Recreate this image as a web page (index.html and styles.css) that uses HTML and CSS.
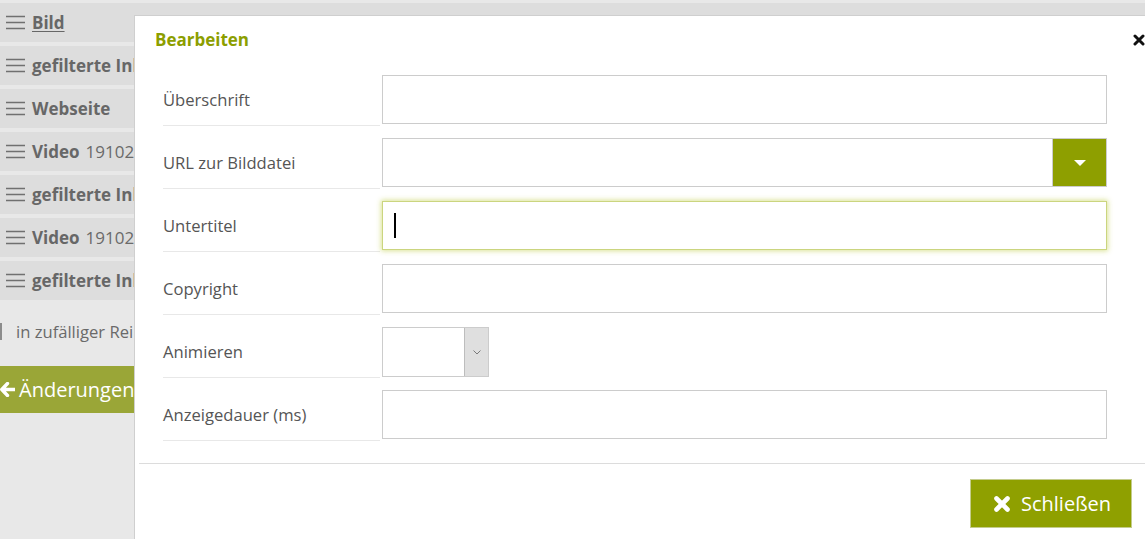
FILE: index.html
```html
<!DOCTYPE html>
<html lang="de">
<head>
<meta charset="utf-8">
<title>Bearbeiten</title>
<link rel="stylesheet" href="styles.css">
</head>
<body>
<div class="page">
  <ul class="list">
    <li class="item">
      <span class="item-text">
        <svg class="burger" width="19" height="15" viewBox="0 0 19 15"><path d="M0 1.5H19M0 7.5H19M0 13.5H19" stroke="#707070" stroke-width="1.5"/></svg>
        <a class="title link" href="#">Bild</a>
      </span>
    </li>
    <li class="item">
      <span class="item-text">
        <svg class="burger" width="19" height="15" viewBox="0 0 19 15"><path d="M0 1.5H19M0 7.5H19M0 13.5H19" stroke="#707070" stroke-width="1.5"/></svg>
        <span class="title">gefilterte Inhalte</span>
      </span>
    </li>
    <li class="item">
      <span class="item-text">
        <svg class="burger" width="19" height="15" viewBox="0 0 19 15"><path d="M0 1.5H19M0 7.5H19M0 13.5H19" stroke="#707070" stroke-width="1.5"/></svg>
        <span class="title">Webseite</span>
      </span>
    </li>
    <li class="item">
      <span class="item-text">
        <svg class="burger" width="19" height="15" viewBox="0 0 19 15"><path d="M0 1.5H19M0 7.5H19M0 13.5H19" stroke="#707070" stroke-width="1.5"/></svg>
        <span class="title">Video</span><span class="meta">191023_video.mp4</span>
      </span>
    </li>
    <li class="item">
      <span class="item-text">
        <svg class="burger" width="19" height="15" viewBox="0 0 19 15"><path d="M0 1.5H19M0 7.5H19M0 13.5H19" stroke="#707070" stroke-width="1.5"/></svg>
        <span class="title">gefilterte Inhalte</span>
      </span>
    </li>
    <li class="item">
      <span class="item-text">
        <svg class="burger" width="19" height="15" viewBox="0 0 19 15"><path d="M0 1.5H19M0 7.5H19M0 13.5H19" stroke="#707070" stroke-width="1.5"/></svg>
        <span class="title">Video</span><span class="meta">191024_video.mp4</span>
      </span>
    </li>
    <li class="item">
      <span class="item-text">
        <svg class="burger" width="19" height="15" viewBox="0 0 19 15"><path d="M0 1.5H19M0 7.5H19M0 13.5H19" stroke="#707070" stroke-width="1.5"/></svg>
        <span class="title">gefilterte Inhalte</span>
      </span>
    </li>
  </ul>
  <div class="random"><span class="cb"></span><span>in zufälliger Reihenfolge</span></div>
  <button class="save" type="button">
    <svg class="save-icon" width="15" height="15" viewBox="0 0 15 15"><path d="M7.5 1.5L1.8 7.5L7.5 13.5M2.2 7.5H15" stroke="#fff" stroke-width="3.4" fill="none" stroke-linejoin="round" stroke-linecap="round"/></svg>
    <span>Änderungen speichern</span>
  </button>
</div>

<div class="modal">
  <div class="modal-header">
    <h2 class="modal-title">Bearbeiten</h2>
    <svg class="close" width="12" height="12" viewBox="0 0 12 12"><path d="M2 2L10 10M10 2L2 10" stroke="#111" stroke-width="3" stroke-linecap="round"/></svg>
  </div>
  <div class="modal-body">
    <div class="form">
      <div class="label"><span>Überschrift</span></div>
      <div class="field"><input class="input" type="text"></div>

      <div class="label"><span>URL zur Bilddatei</span></div>
      <div class="field">
        <div class="group">
          <input class="input" type="text">
          <span class="drop"><svg width="12" height="6" viewBox="0 0 12 6"><path d="M0 0H12L6 6Z" fill="#fff"/></svg></span>
        </div>
      </div>

      <div class="label"><span>Untertitel</span></div>
      <div class="field"><div class="focus-wrap"><input class="input focused" type="text"></div></div>

      <div class="label"><span>Copyright</span></div>
      <div class="field"><input class="input" type="text"></div>

      <div class="label"><span>Animieren</span></div>
      <div class="field">
        <div class="select"><span class="select-val"></span><span class="select-arrow"><svg width="8" height="5" viewBox="0 0 8 5"><path d="M0.5 0.5L4 4L7.5 0.5" stroke="#7a7a7a" stroke-width="1" fill="none"/></svg></span></div>
      </div>

      <div class="label"><span>Anzeigedauer (ms)</span></div>
      <div class="field"><input class="input" type="text"></div>
    </div>
  </div>
  <div class="modal-footer">
    <button class="close-btn" type="button">
      <svg width="18" height="18" viewBox="0 0 18 18"><path d="M3.5 3.5L14.5 14.5M14.5 3.5L3.5 14.5" stroke="#fff" stroke-width="4.6" stroke-linecap="round"/></svg>
      <span>Schließen</span>
    </button>
  </div>
</div>
</body>
</html>
```
FILE: styles.css
```css
html, body {
  margin: 0;
  padding: 0;
}
body {
  width: 1145px;
  height: 539px;
  overflow: hidden;
  position: relative;
  background: #e8e8e8;
  font-family: "Open Sans", "Liberation Sans", sans-serif;
  color: #666;
}
.page {
  padding-top: 3px;
}
.list {
  list-style: none;
  margin: 0;
  padding: 0;
}
.item {
  height: 39px;
  margin-bottom: 4px;
  background: #dddddd;
  display: flex;
  align-items: center;
  padding-left: 6px;
  white-space: nowrap;
  font-size: 17px;
}
.item-text {
  display: flex;
  align-items: center;
  width: 128px;
  overflow: hidden;
}
.burger {
  flex: none;
  margin-right: 7px;
}
.title {
  font-weight: 700;
  color: #676767;
}
.link {
  text-decoration: underline;
  text-underline-offset: 2px;
}
.meta {
  margin-left: 6px;
  color: #6a6a6a;
}
.random {
  margin-top: 18px;
  width: 134px;
  height: 26px;
  display: flex;
  align-items: center;
  font-size: 16.6px;
  color: #6a6a6a;
  white-space: nowrap;
  overflow: hidden;
}
.cb {
  flex: none;
  width: 2px;
  height: 17px;
  background: #8c8c8c;
  margin-right: 14px;
}
.save {
  margin-top: 22px;
  width: 134px;
  height: 47px;
  border: 0;
  padding: 0;
  background: #9aa637;
  color: #fff;
  display: flex;
  align-items: center;
  font-family: inherit;
  font-size: 20px;
  white-space: nowrap;
  overflow: hidden;
}
.save-icon {
  flex: none;
  margin-right: 4px;
}

.modal {
  position: absolute;
  left: 134px;
  top: 15px;
  width: 1019px;
  height: 540px;
  box-sizing: border-box;
  background: #fff;
  border: 1px solid #cfcfcf;
}
.modal-header {
  height: 48px;
  box-sizing: border-box;
  padding: 12px 7px 0 20px;
  display: flex;
  justify-content: space-between;
  align-items: flex-start;
}
.modal-title {
  margin: 0;
  font-size: 17px;
  line-height: 24px;
  font-weight: 700;
  color: #8c9e00;
}
.close {
  margin-top: 6px;
}
.modal-body {
  padding-left: 28px;
}
.form {
  display: grid;
  grid-template-columns: 217px 725px;
  grid-auto-rows: 63px;
  column-gap: 2px;
}
.label {
  padding-top: 11px;
}
.label span {
  display: flex;
  align-items: center;
  height: 49px;
  padding-bottom: 1px;
  border-bottom: 1px solid #e8e8e8;
  font-size: 16.6px;
  color: #555;
}
.field {
  padding-top: 11px;
}
.input {
  display: block;
  width: 100%;
  height: 49px;
  box-sizing: border-box;
  border: 1px solid #ccc;
  margin: 0;
  padding: 0 12px;
  font-family: inherit;
  font-size: 16px;
  background: #fff;
  outline: none;
}
.group {
  display: flex;
}
.group .input {
  flex: 1;
  width: auto;
}
.drop {
  flex: none;
  width: 54px;
  height: 49px;
  box-sizing: border-box;
  border: 1px solid #ccc;
  border-left: 0;
  background: #8e9f00;
  display: flex;
  align-items: center;
  justify-content: center;
}
.focus-wrap {
  position: relative;
}
.focused {
  border-color: #cbd57f;
  box-shadow: 0 0 5px 1px rgba(196, 210, 90, 0.65);
}
.focus-wrap::after {
  content: "";
  position: absolute;
  left: 12px;
  top: 12px;
  width: 1.5px;
  height: 25px;
  background: #000;
}
.select {
  display: flex;
  width: 107px;
  height: 50px;
  box-sizing: border-box;
  border: 1px solid #ccc;
}
.select-val {
  flex: 1;
}
.select-arrow {
  width: 23px;
  background: #dfdfdf;
  border-left: 1px solid #bdbdbd;
  display: flex;
  align-items: center;
  justify-content: center;
}
.modal-footer {
  margin: 21px 0 0 4px;
  border-top: 1px solid #dcdcdc;
  padding: 15px 20px 0 0;
  display: flex;
  justify-content: flex-end;
}
.close-btn {
  width: 162px;
  height: 49px;
  box-sizing: border-box;
  background: #8fa000;
  border: 1px solid #c4cc8c;
  color: #fff;
  font-family: inherit;
  font-size: 20px;
  display: flex;
  align-items: center;
  padding: 0 0 0 22px;
  gap: 10px;
}
```
